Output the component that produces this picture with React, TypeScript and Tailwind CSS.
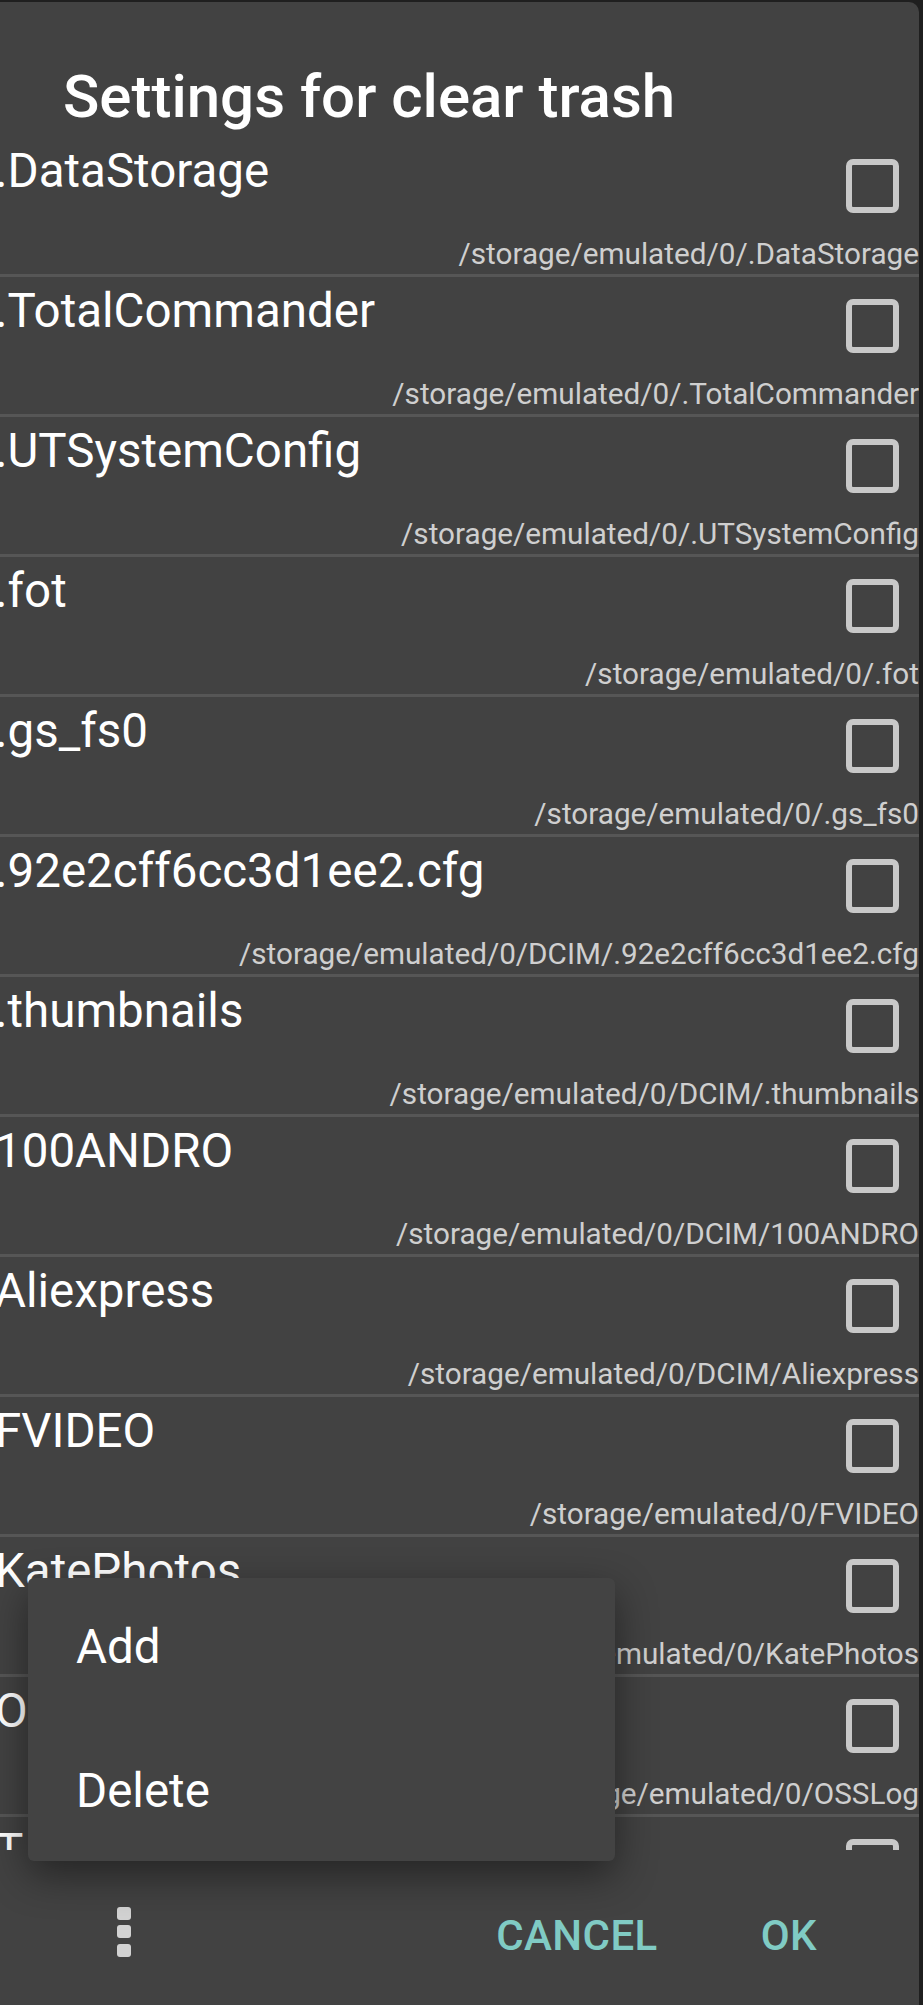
import React from 'react';

const ROWS = [
  { name: '.DataStorage', path: '/storage/emulated/0/.DataStorage' },
  { name: '.TotalCommander', path: '/storage/emulated/0/.TotalCommander' },
  { name: '.UTSystemConfig', path: '/storage/emulated/0/.UTSystemConfig' },
  { name: '.fot', path: '/storage/emulated/0/.fot' },
  { name: '.gs_fs0', path: '/storage/emulated/0/.gs_fs0' },
  { name: '.92e2cff6cc3d1ee2.cfg', path: '/storage/emulated/0/DCIM/.92e2cff6cc3d1ee2.cfg' },
  { name: '.thumbnails', path: '/storage/emulated/0/DCIM/.thumbnails' },
  { name: '100ANDRO', path: '/storage/emulated/0/DCIM/100ANDRO' },
  { name: 'Aliexpress', path: '/storage/emulated/0/DCIM/Aliexpress' },
  { name: 'FVIDEO', path: '/storage/emulated/0/FVIDEO' },
  { name: 'KatePhotos', path: '/storage/emulated/0/KatePhotos' },
  { name: 'OSSLog', path: '/storage/emulated/0/OSSLog' },
  { name: 'TAOBAO', path: '/storage/emulated/0/TAOBAO' },
];

const FolderRow = ({ name, path }: { name: string; path: string }) => (
  <div className="h-[140px] shrink-0 flex flex-col border-b-[3px] border-[#565656]">
    <div className="h-[99px] flex items-start">
      <span className="-ml-[5px] mt-[6px] text-[47.5px] leading-[56px] text-white whitespace-nowrap">
        {name}
      </span>
      <div className="ml-auto mr-[20px] mt-[22px] w-[53px] h-[54px] border-[6px] border-[#c8c8c8] rounded-[7px]" />
    </div>
    <div className="h-[36px] text-right text-[29.7px] leading-[36px] text-[#cfcfcf] whitespace-nowrap overflow-hidden">
      {path}
    </div>
  </div>
);

const MoreIcon = () => (
  <svg width="14" height="50" viewBox="0 0 14 50">
    <rect x="0" y="0" width="14" height="13" rx="3" fill="#d2d2d2" />
    <rect x="0" y="18" width="14" height="13" rx="3" fill="#d2d2d2" />
    <rect x="0" y="37" width="14" height="13" rx="3" fill="#d2d2d2" />
  </svg>
);

export default function App() {
  return (
    <div className="w-[923px] h-[2005px] bg-[#1f1f1f] overflow-hidden" style={{ fontFamily: 'Roboto, "Noto Sans", sans-serif' }}>
      <div className="relative w-[919px] h-[2003px] mt-[2px] bg-[#424242] rounded-tr-[10px] flex flex-col">
        <div className="h-[135px] shrink-0 pl-[63px] pt-[60px]">
          <h1 className="text-[60px] leading-[70px] font-medium text-white whitespace-nowrap">
            Settings for clear trash
          </h1>
        </div>

        <div className="h-[1713px] shrink-0 overflow-hidden flex flex-col">
          {ROWS.map(r => (
            <FolderRow key={r.path} name={r.name} path={r.path} />
          ))}
        </div>

        <div className="flex-1 flex items-start">
          <div className="ml-[117px] mt-[57px]">
            <MoreIcon />
          </div>
          <span className="ml-auto mt-[61px] text-[42px] leading-[50px] font-medium tracking-[0.01em] text-[#80cbc4]">
            CANCEL
          </span>
          <span className="ml-[103px] mr-[102px] mt-[61px] text-[42px] leading-[50px] font-medium tracking-[0.01em] text-[#80cbc4]">
            OK
          </span>
        </div>

        <div className="absolute left-[28px] top-[1576px] w-[587px] h-[283px] bg-[#434343] rounded-[6px] shadow-[0_14px_40px_rgba(0,0,0,0.45)] overflow-hidden">
          <div className="-mt-[3px] flex flex-col">
            <div className="h-[144px] leading-[144px] pl-[48px] text-[47.5px] text-white">Add</div>
            <div className="h-[144px] leading-[144px] pl-[48px] text-[47.5px] text-white">Delete</div>
          </div>
        </div>
      </div>
    </div>
  );
}
